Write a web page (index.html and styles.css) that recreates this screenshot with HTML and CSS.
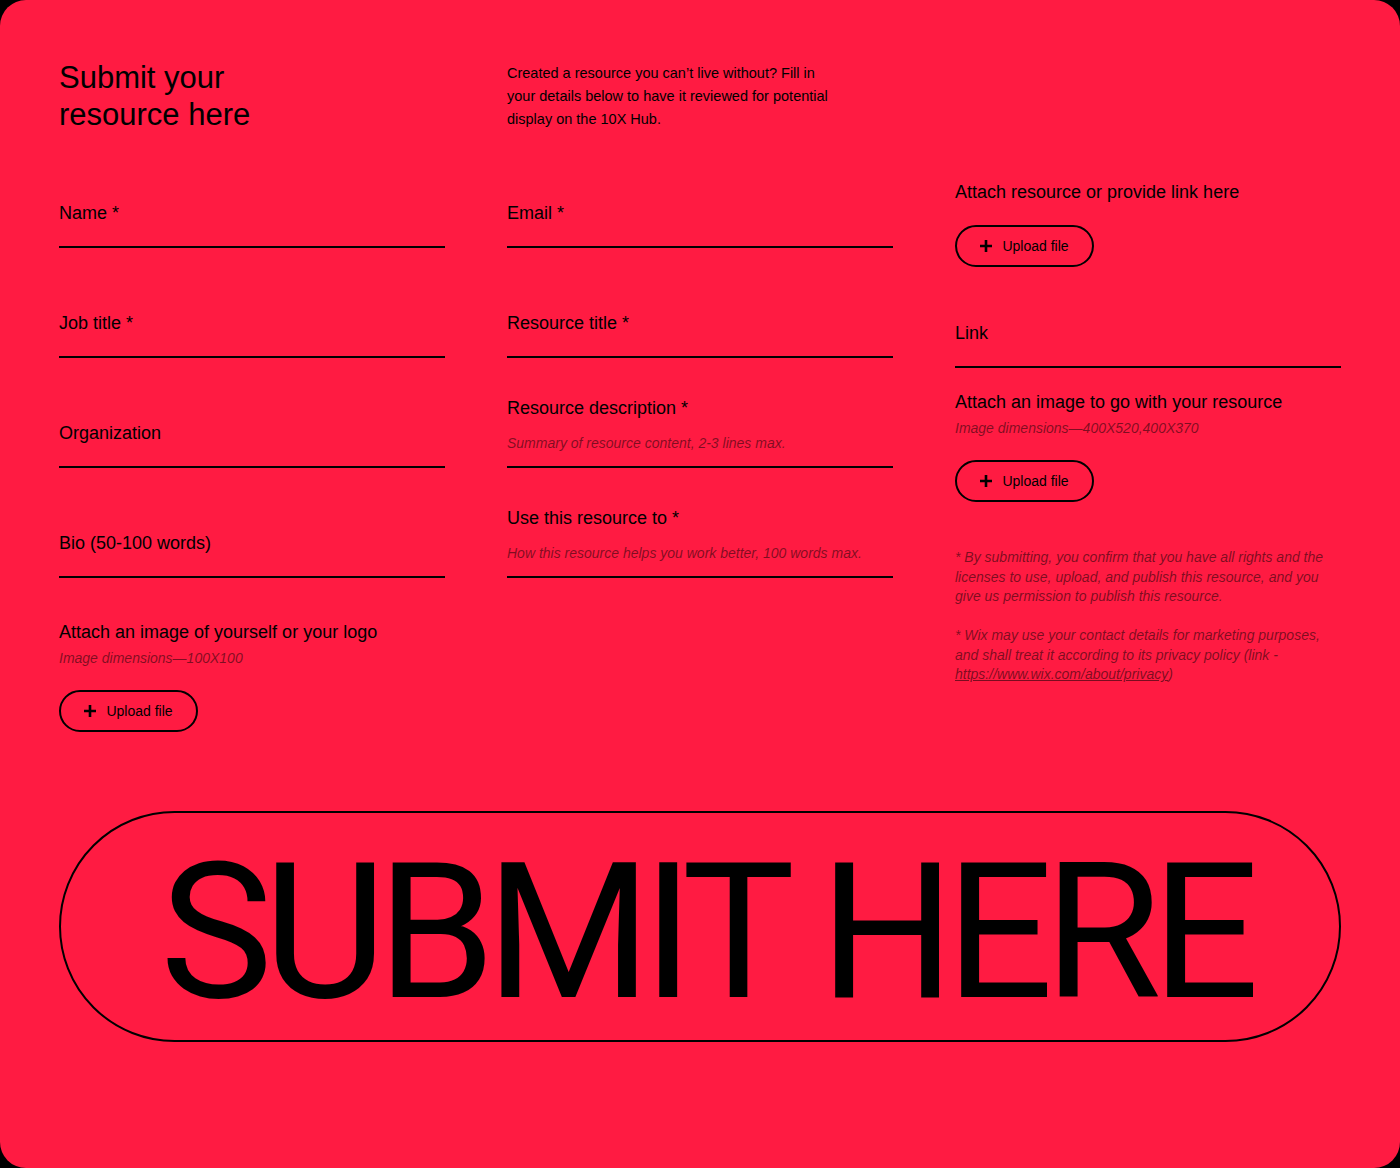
FILE: index.html
```html
<!DOCTYPE html>
<html lang="en">
<head>
<meta charset="utf-8">
<title>Submit your resource here</title>
<link rel="stylesheet" href="styles.css">
</head>
<body>
<main class="card">
  <div class="layout">
    <h1 class="title">Submit your<br>resource here</h1>
    <p class="intro">Created a resource you can’t live without? Fill in your details below to have it reviewed for potential display on the 10X Hub.</p>
    <div class="spacer"></div>

    <div class="col">
      <div class="field"><label class="label">Name *</label><div class="input"></div></div>
      <div class="field"><label class="label">Job title *</label><div class="input"></div></div>
      <div class="field"><label class="label">Organization</label><div class="input"></div></div>
      <div class="field"><label class="label">Bio (50-100 words)</label><div class="input"></div></div>
      <div class="attach attach-first">
        <div class="label">Attach an image of yourself or your logo</div>
        <div class="hint">Image dimensions—100X100</div>
        <button class="upload" type="button"><svg class="plus" width="12" height="12" viewBox="0 0 12 12"><path d="M6 0v12M0 6h12" stroke="#000" stroke-width="2.6"/></svg><span>Upload file</span></button>
      </div>
    </div>

    <div class="col">
      <div class="field"><label class="label">Email *</label><div class="input"></div></div>
      <div class="field"><label class="label">Resource title *</label><div class="input"></div></div>
      <div class="field"><label class="label">Resource description *</label><div class="input input-ph">Summary of resource content, 2-3 lines max.</div></div>
      <div class="field"><label class="label">Use this resource to *</label><div class="input input-ph">How this resource helps you work better, 100 words max.</div></div>
    </div>

    <div class="col col-right">
      <div class="label">Attach resource or provide link here</div>
      <button class="upload upload-top" type="button"><svg class="plus" width="12" height="12" viewBox="0 0 12 12"><path d="M6 0v12M0 6h12" stroke="#000" stroke-width="2.6"/></svg><span>Upload file</span></button>
      <div class="field field-link"><label class="label">Link</label><div class="input"></div></div>
      <div class="attach attach-right">
        <div class="label">Attach an image to go with your resource</div>
        <div class="hint">Image dimensions—400X520,400X370</div>
        <button class="upload" type="button"><svg class="plus" width="12" height="12" viewBox="0 0 12 12"><path d="M6 0v12M0 6h12" stroke="#000" stroke-width="2.6"/></svg><span>Upload file</span></button>
      </div>
      <div class="legal">
        <p>* By submitting, you confirm that you have all rights and the licenses to use, upload, and publish this resource, and you give us permission to publish this resource.</p>
        <p>* Wix may use your contact details for marketing purposes, and shall treat it according to its privacy policy (link - <span class="u">https://www.wix.com/about/privacy</span>)</p>
      </div>
    </div>
  </div>

  <button class="submit" type="button">SUBMIT HERE</button>
</main>
</body>
</html>
```

FILE: styles.css
```css
html, body {
  margin: 0;
  padding: 0;
  background: #000;
}

.card {
  box-sizing: border-box;
  width: 1400px;
  height: 1168px;
  background: #ff1b42;
  border-radius: 26px;
  padding: 59px 59px 0 59px;
  font-family: "Liberation Sans", Arial, Helvetica, sans-serif;
  color: #000;
}

.layout {
  display: grid;
  grid-template-columns: 386px 386px 386px;
  column-gap: 62px;
  row-gap: 5px;
  align-items: start;
}

.title {
  margin: 0;
  font-size: 31px;
  font-weight: 400;
  line-height: 37px;
}

.intro {
  margin: 3px 0 0 0;
  width: 335px;
  font-size: 14.5px;
  line-height: 23px;
}

.col {
  display: flex;
  flex-direction: column;
}

.col-right {
  padding-top: 43px;
}

.label {
  display: block;
  font-size: 18px;
  line-height: 22px;
}

.field {
  box-sizing: border-box;
  height: 110px;
  display: flex;
  flex-direction: column;
  justify-content: flex-end;
  border-bottom: 2px solid #000;
}

.input {
  height: 22px;
}

.input-ph {
  margin-top: 13px;
  margin-bottom: 12px;
  font-size: 14px;
  line-height: 22px;
  font-style: italic;
  color: rgba(0, 0, 0, 0.5);
  white-space: nowrap;
}

.field-link {
  height: auto;
  margin-top: 55px;
}

.hint {
  margin-top: 5px;
  font-size: 14px;
  line-height: 20px;
  font-style: italic;
  color: rgba(0, 0, 0, 0.5);
}

.attach {
  display: flex;
  flex-direction: column;
  align-items: flex-start;
}

.attach-first {
  margin-top: 43px;
}

.attach-right {
  margin-top: 23px;
}

.upload {
  box-sizing: border-box;
  width: 139px;
  height: 42px;
  margin-top: 22px;
  border: 2px solid #000;
  border-radius: 21px;
  background: transparent;
  display: flex;
  align-items: center;
  justify-content: center;
  gap: 10px;
  padding: 0;
  font-family: "Liberation Sans", Arial, sans-serif;
  font-size: 14px;
  color: #000;
  cursor: pointer;
}

.upload-top {
  align-self: flex-start;
}

.plus {
  display: block;
  flex: none;
}

.legal {
  margin-top: 46px;
  font-size: 14px;
  line-height: 19.5px;
  font-style: italic;
  color: rgba(0, 0, 0, 0.52);
}

.legal p {
  margin: 0 0 19.5px 0;
}

.u {
  text-decoration: underline;
}

.submit {
  box-sizing: border-box;
  display: flex;
  align-items: center;
  justify-content: center;
  width: 100%;
  height: 231px;
  margin-top: 79px;
  padding: 10px 0 0 10px;
  background: transparent;
  border: 2px solid #000;
  border-radius: 116px;
  font-family: Roboto, "Liberation Sans", sans-serif;
  font-weight: 400;
  font-size: 190px;
  line-height: 1;
  letter-spacing: -9.5px;
  color: #000;
  cursor: pointer;
}
```
